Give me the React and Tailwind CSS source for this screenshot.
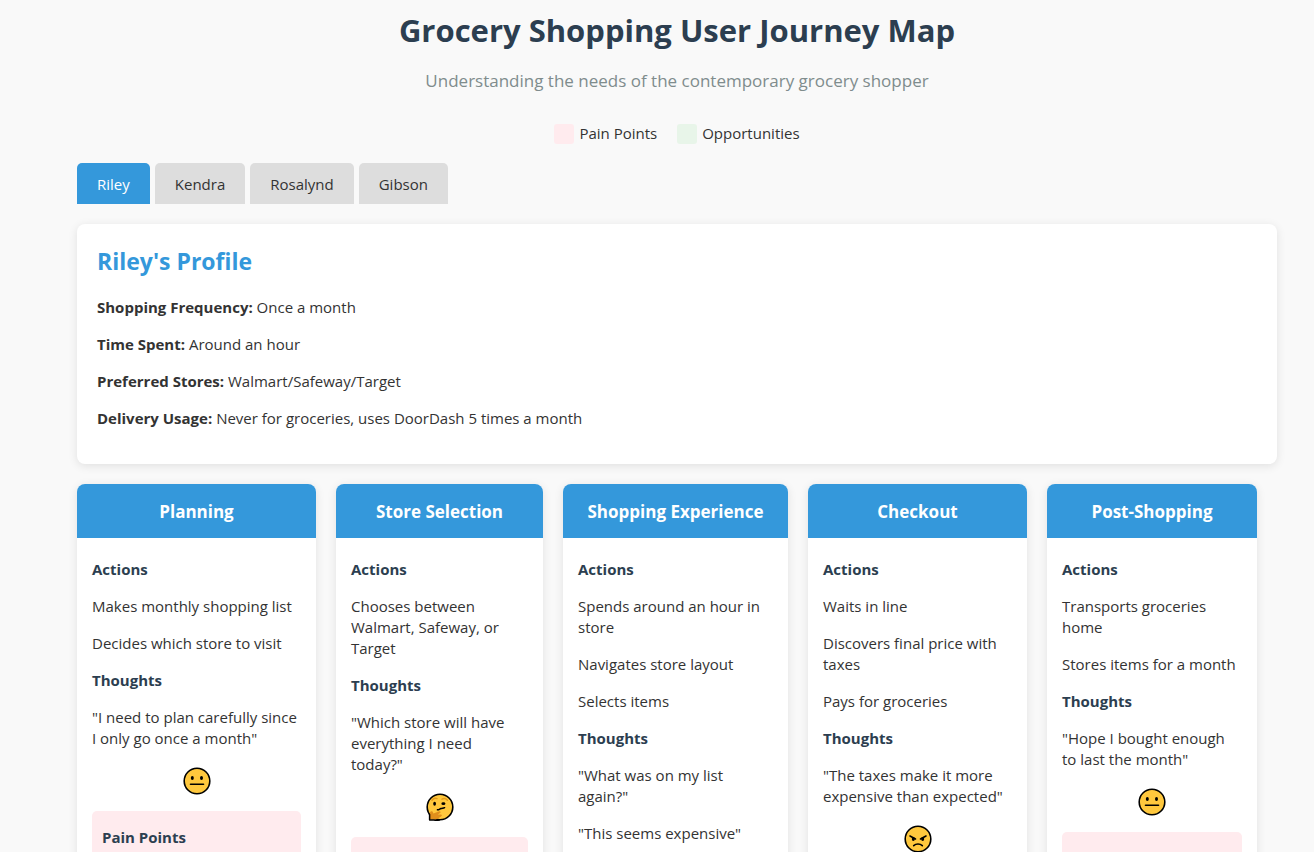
import { useState } from 'react';

const PROFILES = {
  Riley: [
    ['Shopping Frequency:', 'Once a month'],
    ['Time Spent:', 'Around an hour'],
    ['Preferred Stores:', 'Walmart/Safeway/Target'],
    ['Delivery Usage:', 'Never for groceries, uses DoorDash 5 times a month'],
  ],
};

const TABS = ['Riley', 'Kendra', 'Rosalynd', 'Gibson'];

const STAGES = [
  {
    title: 'Planning',
    actions: ['Makes monthly shopping list', 'Decides which store to visit'],
    thoughts: ['"I need to plan carefully since I only go once a month"'],
    mood: 'neutral',
  },
  {
    title: 'Store Selection',
    actions: ['Chooses between Walmart, Safeway, or Target'],
    thoughts: ['"Which store will have everything I need today?"'],
    mood: 'thinking',
  },
  {
    title: 'Shopping Experience',
    actions: ['Spends around an hour in store', 'Navigates store layout', 'Selects items'],
    thoughts: ['"What was on my list again?"', '"This seems expensive"'],
    mood: 'neutral',
  },
  {
    title: 'Checkout',
    actions: ['Waits in line', 'Discovers final price with taxes', 'Pays for groceries'],
    thoughts: ['"The taxes make it more expensive than expected"'],
    mood: 'angry',
  },
  {
    title: 'Post-Shopping',
    actions: ['Transports groceries home', 'Stores items for a month'],
    thoughts: ['"Hope I bought enough to last the month"'],
    mood: 'neutral',
  },
];

function Face({ mood }) {
  return (
    <svg viewBox="0 0 28 28" className="mx-auto mt-[18px] mb-4 block size-7" role="img" aria-label={mood}>
      <circle cx="14" cy="14" r="12.8" fill="#ffc83d" stroke="#000" strokeWidth="1.6" />
      {mood === 'neutral' && (
        <g>
          <ellipse cx="9.3" cy="11" rx="1.5" ry="2" />
          <ellipse cx="18.5" cy="11" rx="1.5" ry="2" />
          <path d="M7.5 17.3h13" stroke="#000" strokeWidth="1.6" strokeLinecap="round" />
        </g>
      )}
      {mood === 'thinking' && (
        <g fill="none" strokeLinecap="round" strokeLinejoin="round">
          <path d="M6 7.2c1.3-1.7 3.2-2.2 5-1.6M16 6.2c1.9-1 4-.6 5.4 1" stroke="#e39a1c" strokeWidth="1.5" />
          <ellipse cx="8.6" cy="10.7" rx="1.4" ry="2" fill="#000" />
          <ellipse cx="17.4" cy="10.7" rx="2" ry="1.4" fill="#000" />
          <path d="M11.4 16.8c1.4.3 2-.8 3.6-1.2 1.500-.4 2.500-.3 3.600-.9" stroke="#000" strokeWidth="1.5" />
          <path d="M4 26.600V20c0-2.200 2.600-2.400 3-.6l.4 1.200 5.200-2.200c1.900-.7 2.700 1 1.200 1.800l-2 1.200 3 .2c1.500.2 1.300 1.700.2 2l-3.700 2.400c-2.200 1-4.900 1-7.300.6Z" fill="#e08f1c" />
          <path d="M3.600 21.500V26.900h4.200c2 .5 3.900.4 5.600.1" stroke="#000" strokeWidth="1.5" />
        </g>
      )}
      {mood === 'angry' && (
        <g fill="none" stroke="#000" strokeWidth="1.6" strokeLinecap="round">
          <ellipse cx="9.3" cy="14" rx="1.5" ry="1.9" fill="#000" stroke="none" />
          <ellipse cx="18.7" cy="14" rx="1.5" ry="1.9" fill="#000" stroke="none" />
          <path d="M6 11 11.500 14M22 11 16.500 14M9.700 20.600c2.400-2.200 6.200-2.200 8.600 0" />
        </g>
      )}
    </svg>
  );
}

function Section({ title, items }) {
  return (
    <>
      <h4 className="font-bold text-[#2c3e50]">{title}</h4>
      {items.map((item) => (
        <p key={item}>{item}</p>
      ))}
    </>
  );
}

function Stage({ title, actions, thoughts, mood }) {
  return (
    <section className="overflow-hidden rounded-lg bg-white shadow-[0_2px_10px_rgba(0,0,0,0.1)]">
      <h3 className="bg-[#3498db] px-4 pt-4 pb-[14px] text-center text-[17px] leading-6 font-bold text-white">{title}</h3>
      <div className="px-[15px] pt-[21px] pb-[15px]">
        <div className="flex flex-col gap-4 pr-[2px]">
          <Section title="Actions" items={actions} />
          <Section title="Thoughts" items={thoughts} />
        </div>
        <Face mood={mood} />
        <div className="rounded-[5px] bg-[#ffebee] px-[10px] py-4">
          <h4 className="font-bold text-[#2c3e50]">Pain Points</h4>
        </div>
      </div>
    </section>
  );
}

export default function App() {
  const [active, setActive] = useState('Riley');
  const facts = PROFILES[active] ?? [];

  return (
    <div className="min-h-screen bg-[#f9f9f9] pt-[9px] pr-[37px] pb-5 pl-[77px] font-['Open_Sans',sans-serif] text-[15px] leading-[21px] text-[#333]">
      <header className="text-center">
        <h1 className="text-[31px] leading-[42px] font-bold text-[#2c3e50]">Grocery Shopping User Journey Map</h1>
        <p className="mt-[18px] text-[17px] leading-6 text-[#7f8c8d]">
          Understanding the needs of the contemporary grocery shopper
        </p>
      </header>

      <div className="mt-[30px] flex justify-center gap-5">
        <div className="flex items-center gap-[5px]">
          <span className="size-5 rounded-[3px] bg-[#ffebee]" />
          Pain Points
        </div>
        <div className="flex items-center gap-[5px]">
          <span className="size-5 rounded-[3px] bg-[#e8f5e9]" />
          Opportunities
        </div>
      </div>

      <div role="tablist" className="mt-[19px] flex gap-[5px]">
        {TABS.map((name) => (
          <button
            key={name}
            type="button"
            role="tab"
            aria-selected={name === active}
            onClick={() => setActive(name)}
            className={`cursor-pointer rounded-t-[5px] px-5 pt-[11px] pb-[9px] ${
              name === active ? 'bg-[#3498db] text-white' : 'bg-[#ddd]'
            }`}
          >
            {name}
          </button>
        ))}
      </div>

      <section className="mt-5 rounded-lg bg-white px-5 pt-[21px] pb-[35px] shadow-[0_2px_10px_rgba(0,0,0,0.1)]">
        <h2 className="text-[23px] leading-8 font-bold text-[#3498db]">{active}'s Profile</h2>
        <div className="mt-5 flex flex-col gap-4">
          {facts.map(([label, value]) => (
            <p key={label}>
              <strong>{label}</strong> {value}
            </p>
          ))}
        </div>
      </section>

      <main className="mt-5 grid grid-cols-[239fr_207fr_225fr_219fr_210fr] gap-5 pr-5">
        {STAGES.map((stage) => (
          <Stage key={stage.title} {...stage} />
        ))}
      </main>
    </div>
  );
}
